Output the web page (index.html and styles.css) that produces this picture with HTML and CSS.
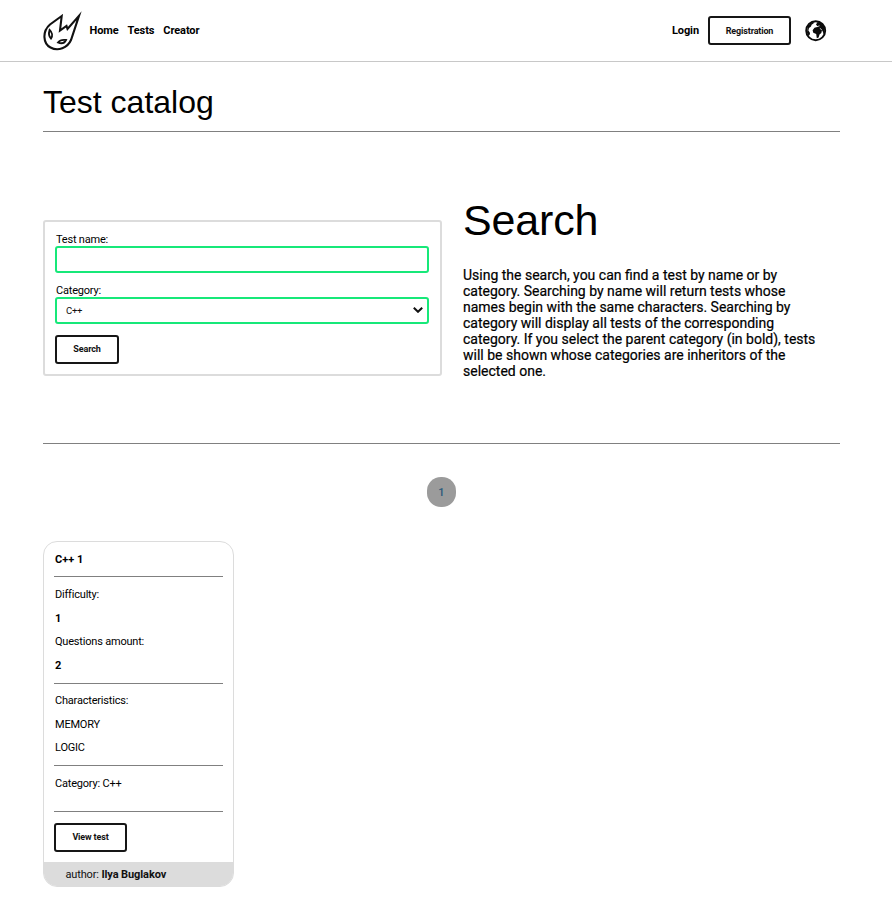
FILE: index.html
```html
<!DOCTYPE html>
<html lang="en">
<head>
<meta charset="utf-8">
<title>Test catalog</title>
<link rel="stylesheet" href="styles.css">
</head>
<body>
<header class="header">
  <a class="logo" href="#" aria-label="Home page">
    <svg width="40" height="41" viewBox="0 0 40 41" fill="none" stroke="#111" stroke-width="2.1" stroke-linejoin="miter" stroke-miterlimit="8">
      <path d="M18.700 6 7 14.500C-1 21.500 0 33.500 7.500 37.500C15 41.500 24.500 38 28 30L36 5.800 24.500 19 23.500 16 17 20.500Z"/>
      <path stroke-width="1.900" d="M6.600 20C9.300 22.500 9.800 26 8 28.500C6 26.500 5.500 23.500 6.600 20Z"/>
      <path stroke-width="1.900" d="M15 32.500C17 29.800 19.500 29.500 23 30C21.500 33 18.500 34 15 32.500Z"/>
    </svg>
  </a>
  <nav class="nav">
    <a href="#">Home</a>
    <a href="#">Tests</a>
    <a href="#">Creator</a>
  </nav>
  <div class="account">
    <a class="login" href="#">Login</a>
    <button class="button button-registration">Registration</button>
    <svg class="globe" width="22" height="22" viewBox="0 0 22 22">
      <circle cx="10.700" cy="10.700" r="9.500" fill="#fff" stroke="#0b0b0b" stroke-width="1.900"/>
      <path fill="#0b0b0b" d="M2.500 6.500 6 3.200 9 2.200 8.500 3.600 6.600 4.800 6 6.600 4 8 3.400 10.500 4.800 12.500 5 14 3.800 16 2 13ZM11 4.600 12.500 2.300 15.500 2.500 19.500 7 19.700 12 18.500 14.500 18 12 17 10.300 16.300 13 14.500 14.500 13.600 17.500 11.800 18.300 11.200 14 8.300 12.800 7.600 10.300 9.500 7.800 12.800 6.800Z"/>
      <path d="M11.800 6.800 14.500 5.800M14.800 8.300 16.800 9.800" stroke="#fff" stroke-width=".8"/>
    </svg>
  </div>
</header>
<main class="container">
  <h1 class="title">Test catalog</h1>
  <section class="search">
    <form class="form">
      <label class="label" for="name">Test name:</label>
      <input class="field" id="name" type="text">
      <label class="label label-category" for="category">Category:</label>
      <div class="select-wrap">
        <select class="field select" id="category"><option>C++</option></select>
        <svg class="chevron" width="10" height="6" viewBox="0 0 10 6" fill="none" stroke="#111" stroke-width="2"><path d="M.8.8 5 4.800 9.200.8"/></svg>
      </div>
      <button class="button button-search" type="button">Search</button>
    </form>
    <div class="about">
      <h2 class="about-title">Search</h2>
      <p class="about-text">Using the search, you can find a test by name or by<br>category. Searching by name will return tests whose<br>names begin with the same characters. Searching by<br>category will display all tests of the corresponding<br>category. If you select the parent category (in bold), tests<br>will be shown whose categories are inheritors of the<br>selected one.</p>
    </div>
  </section>
  <nav class="pagination"><a class="page" href="#">1</a></nav>
  <article class="card">
    <div class="card-body">
      <p class="card-name">C++ 1</p>
      <div class="group group-stats">
        <p>Difficulty:</p>
        <p class="value">1</p>
        <p>Questions amount:</p>
        <p class="value">2</p>
      </div>
      <div class="group group-traits">
        <p>Characteristics:</p>
        <p>MEMORY</p>
        <p>LOGIC</p>
      </div>
      <div class="group group-category"><p>Category: C++</p></div>
      <div class="group group-action"><button class="button button-view">View test</button></div>
    </div>
    <footer class="card-footer">author: <b>Ilya Buglakov</b></footer>
  </article>
</main>
</body>
</html>
```
FILE: styles.css
```css
* { box-sizing: border-box; }
body { margin: 0; background: #fff; color: #000; font-family: Roboto, sans-serif; font-size: 11px; }
a { color: inherit; text-decoration: none; }
h1, h2, p { margin: 0; font-weight: 400; }
.header { display: flex; align-items: center; height: 62px; padding: 0 65px 0 43px; border-bottom: 1px solid #c8c8c8; }
.logo { height: 41px; margin-top: 0; }
.logo svg, .globe { display: block; }
.nav { display: flex; gap: 9px; margin-left: 6.500px; font-weight: 700; line-height: 16px; letter-spacing: -.1px; }
.account { display: flex; align-items: center; margin-left: auto; font-weight: 700; }
.login { margin-right: 9px; letter-spacing: -.1px; }
.button { display: block; height: 29px; padding: 0; border: 2px solid #161616; border-radius: 3px; background: #fff; color: #111; font: 700 9px/25px Roboto, sans-serif; letter-spacing: -.15px; text-align: center; }
.button-registration { width: 83px; margin-right: 14px; padding-top: 1px; line-height: 24px; }
.container { width: 797px; margin-left: 43px; }
.title { height: 70px; padding-top: 21px; border-bottom: 1px solid #808080; font: 400 32px/38px "Liberation Sans", sans-serif; }
.search { display: flex; gap: 21px; height: 312px; border-bottom: 1px solid #808080; }
.form { width: 399px; height: 156px; margin-top: 88px; padding: 10px 11px 0 10px; border: 2px solid #dcdcdc; border-radius: 3px; }
.label { display: block; height: 14px; padding-left: 1px; line-height: 16px; letter-spacing: -.2px; }
.label-category { margin-top: 10px; }
.field { display: block; width: 100%; height: 27px; padding: 0 9px; border: 2px solid #17e879; border-radius: 3px; background: #fff; color: #111; font: 400 9.500px/23px Roboto, sans-serif; letter-spacing: -.3px; outline: none; }
.select { appearance: none; padding-bottom: 1px; }
.select-wrap { position: relative; }
.chevron { position: absolute; right: 6px; top: 10px; }
.button-search { width: 64px; margin-top: 11px; }
.about { width: 377px; padding-top: 60px; }
.about-title { font: 400 43px/56px "Liberation Sans", sans-serif; letter-spacing: -.15px; }
.about-text { margin-top: 19px; font-size: 14px; font-weight: 400; line-height: 16px; white-space: nowrap; -webkit-text-stroke: .2px #000; }
.pagination { display: flex; justify-content: center; padding: 33px 0 34px; }
.page { width: 29px; height: 30px; border-radius: 14px; background: #9b9b9b; color: #28577a; font-weight: 500; line-height: 31px; text-align: center; }
.card { width: 191px; height: 346px; border: 1px solid #dcdcdc; border-radius: 14px; overflow: hidden; }
.card-body { height: 320px; padding: 0 10px; }
.card-name { height: 34px; padding-left: 1px; font-weight: 700; line-height: 35px; }
.group { display: flex; flex-direction: column; border-top: 1px solid #808080; }
.group p { height: 23.600px; padding-left: 1px; line-height: 23.600px; letter-spacing: -.2px; }
.group .value { font-weight: 700; }
.group-stats { height: 107px; padding-top: 6px; }
.group-traits { height: 82px; padding-top: 5px; }
.group-category { height: 46px; padding-top: 6px; }
.group-action { padding-top: 11px; }
.button-view { width: 73px; }
.card-footer { height: 25px; padding-left: 21.500px; background: #dcdcdc; color: #111; line-height: 25px; letter-spacing: -.15px; }
.card-footer b { font-weight: 700; letter-spacing: -.1px; }
```
